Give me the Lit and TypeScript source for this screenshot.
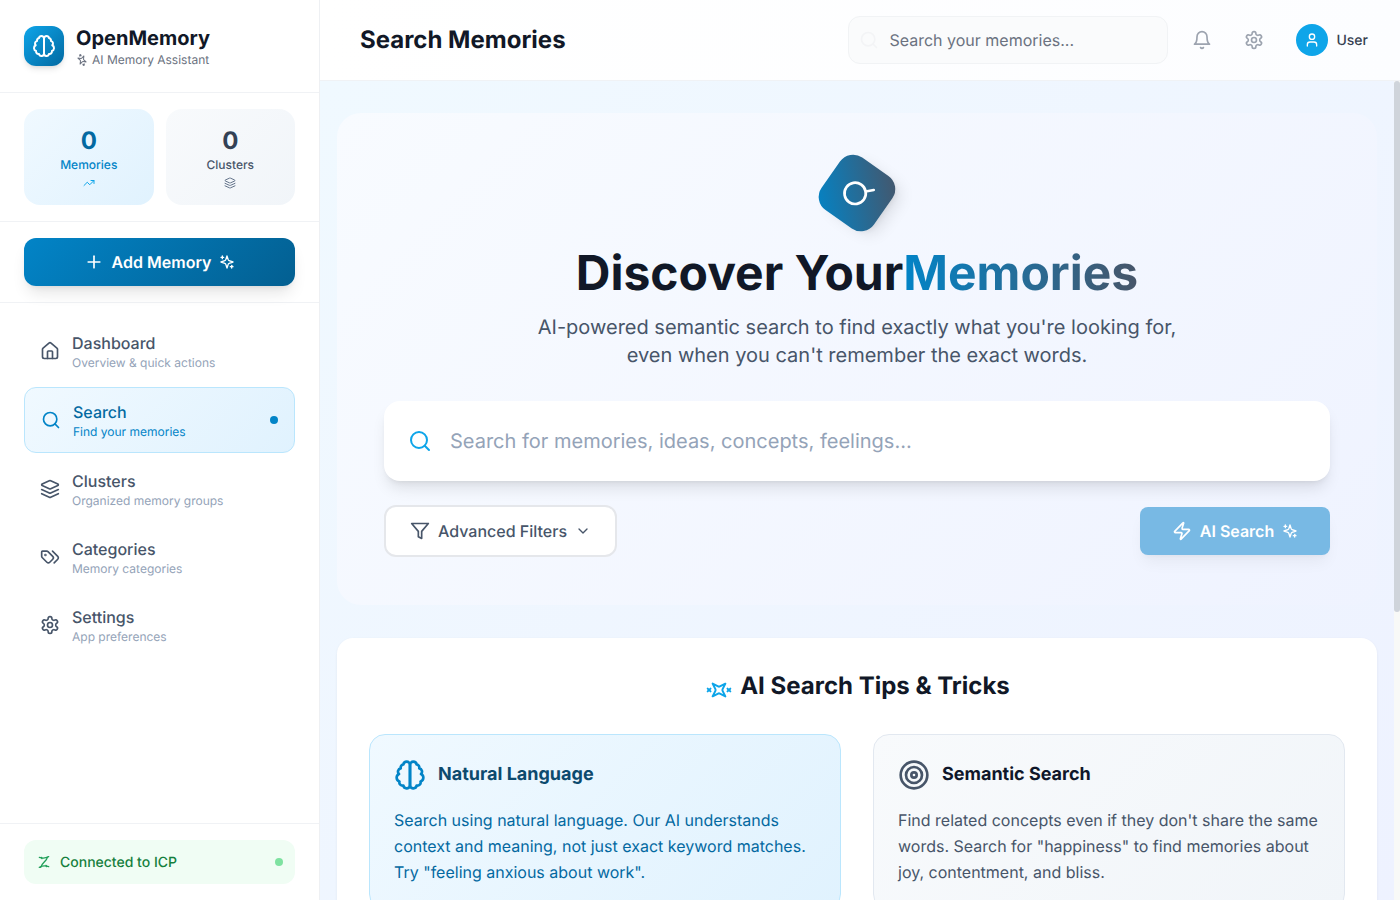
import { LitElement, html, css, svg } from "lit";
import { customElement } from "lit/decorators.js";

/* lucide paths */
const paths = {
  brain: svg`<path d="M9.5 2A2.5 2.5 0 0 1 12 4.5v15a2.5 2.5 0 0 1-4.96.44 2.5 2.5 0 0 1-2.96-3.08 3 3 0 0 1-.34-5.58 2.5 2.5 0 0 1 1.32-4.24 2.5 2.5 0 0 1 1.98-3A2.5 2.5 0 0 1 9.5 2Z"/><path d="M14.5 2A2.5 2.5 0 0 0 12 4.5v15a2.5 2.5 0 0 0 4.96.44 2.5 2.5 0 0 0 2.96-3.08 3 3 0 0 0 .34-5.58 2.5 2.5 0 0 0-1.32-4.24 2.5 2.5 0 0 0-1.98-3A2.5 2.5 0 0 0 14.5 2Z"/>`,
  sparkles: svg`<path d="m12 3-1.912 5.813a2 2 0 0 1-1.275 1.275L3 12l5.813 1.912a2 2 0 0 1 1.275 1.275L12 21l1.912-5.813a2 2 0 0 1 1.275-1.275L21 12l-5.813-1.912a2 2 0 0 1-1.275-1.275L12 3Z"/><path d="M5 3v4"/><path d="M19 17v4"/><path d="M3 5h4"/><path d="M17 19h4"/>`,
  trending: svg`<polyline points="22 7 13.5 15.5 8.5 10.5 2 17"/><polyline points="16 7 22 7 22 13"/>`,
  layers: svg`<path d="m12.83 2.18a2 2 0 0 0-1.66 0L2.6 6.08a1 1 0 0 0 0 1.83l8.58 3.91a2 2 0 0 0 1.66 0l8.58-3.9a1 1 0 0 0 0-1.83Z"/><path d="m22 17.65-9.17 4.16a2 2 0 0 1-1.66 0L2 17.65"/><path d="m22 12.65-9.17 4.16a2 2 0 0 1-1.66 0L2 12.65"/>`,
  plus: svg`<path d="M5 12h14"/><path d="M12 5v14"/>`,
  home: svg`<path d="M15 21v-8a1 1 0 0 0-1-1h-4a1 1 0 0 0-1 1v8"/><path d="M3 10a2 2 0 0 1 .709-1.528l7-5.999a2 2 0 0 1 2.582 0l7 5.999A2 2 0 0 1 21 10v9a2 2 0 0 1-2 2H5a2 2 0 0 1-2-2z"/>`,
  search: svg`<circle cx="11" cy="11" r="8"/><path d="m21 21-4.3-4.3"/>`,
  tags: svg`<path d="m15 5 6.3 6.3a2.4 2.4 0 0 1 0 3.4L17 19"/><path d="M9.586 5.586A2 2 0 0 0 8.172 5H3a1 1 0 0 0-1 1v5.172a2 2 0 0 0 .586 1.414L8.29 18.29a2.426 2.426 0 0 0 3.42 0l3.58-3.58a2.426 2.426 0 0 0 0-3.42z"/><circle cx="6.5" cy="9.5" r=".5" fill="currentColor"/>`,
  settings: svg`<path d="M12.22 2h-.44a2 2 0 0 0-2 2v.18a2 2 0 0 1-1 1.73l-.43.25a2 2 0 0 1-2 0l-.15-.08a2 2 0 0 0-2.73.73l-.22.38a2 2 0 0 0 .73 2.73l.15.1a2 2 0 0 1 1 1.72v.51a2 2 0 0 1-1 1.74l-.15.09a2 2 0 0 0-.73 2.73l.22.38a2 2 0 0 0 2.73.73l.15-.08a2 2 0 0 1 2 0l.43.25a2 2 0 0 1 1 1.73V20a2 2 0 0 0 2 2h.44a2 2 0 0 0 2-2v-.18a2 2 0 0 1 1-1.73l.43-.25a2 2 0 0 1 2 0l.15.08a2 2 0 0 0 2.73-.73l.22-.39a2 2 0 0 0-.73-2.73l-.15-.08a2 2 0 0 1-1-1.74v-.5a2 2 0 0 1 1-1.74l.15-.09a2 2 0 0 0 .73-2.73l-.22-.38a2 2 0 0 0-2.73-.73l-.15.08a2 2 0 0 1-2 0l-.43-.25a2 2 0 0 1-1-1.73V4a2 2 0 0 0-2-2z"/><circle cx="12" cy="12" r="3"/>`,
  zap: svg`<path d="M4 14a1 1 0 0 1-.78-1.63l9.9-10.2a.5.5 0 0 1 .86.46l-1.92 6.02A1 1 0 0 0 13 10h7a1 1 0 0 1 .78 1.63l-9.9 10.2a.5.5 0 0 1-.86-.46l1.92-6.02A1 1 0 0 0 11 14z"/>`,
  filter: svg`<polygon points="22 3 2 3 10 12.46 10 19 14 21 14 12.46 22 3"/>`,
  chevron: svg`<path d="m6 9 6 6 6-6"/>`,
  bell: svg`<path d="M6 8a6 6 0 0 1 12 0c0 7 3 9 3 9H3s3-2 3-9"/><path d="M10.3 21a1.94 1.94 0 0 0 3.4 0"/>`,
  user: svg`<path d="M19 21v-2a4 4 0 0 0-4-4H9a4 4 0 0 0-4 4v2"/><circle cx="12" cy="7" r="4"/>`,
  target: svg`<circle cx="12" cy="12" r="10"/><circle cx="12" cy="12" r="6"/><circle cx="12" cy="12" r="2"/>`,
  // the ICP mark in the reference reads as a twisted Z
  helix: svg`<path d="M5 5c4 1.500 9 1.500 14-1"/><path d="M17 5c-1 6-8 8-10 15"/><path d="M5 20c5-2.500 10-2.500 14-1"/><path d="M9 7l-1-2"/><path d="M16 19l-1-2"/>`,
};

type IconName = keyof typeof paths;

function icon(name: IconName, size: number, cls = "") {
  return html`<svg class=${cls} width=${size} height=${size} viewBox="0 0 24 24" fill="none" stroke="currentColor" stroke-width="2" stroke-linecap="round" stroke-linejoin="round">${paths[name]}</svg>`;
}

const navItems: { icon: IconName; title: string; sub: string; active?: boolean }[] = [
  { icon: "home", title: "Dashboard", sub: "Overview & quick actions" },
  { icon: "search", title: "Search", sub: "Find your memories", active: true },
  { icon: "layers", title: "Clusters", sub: "Organized memory groups" },
  { icon: "tags", title: "Categories", sub: "Memory categories" },
  { icon: "settings", title: "Settings", sub: "App preferences" },
];

@customElement("app-root")
export class AppRoot extends LitElement {
  static styles = css`
    :host {
      display: flex;
      width: 1400px;
      height: 900px;
      overflow: hidden;
      font-family: Inter, "Liberation Sans", sans-serif;
      text-rendering: geometricPrecision;
      color: #0f172a;
      background: #fff;
    }
    svg { display: block; flex: none; }

    /* sidebar */
    .sidebar {
      width: 320px;
      flex: none;
      box-sizing: border-box;
      border-right: 1px solid #eef0f3;
      display: flex;
      flex-direction: column;
      background: #fff;
    }
    .brand {
      height: 93px;
      box-sizing: border-box;
      padding: 26px 24px 0;
      display: flex;
      gap: 12px;
      border-bottom: 1px solid #f0f2f5;
    }
    .logo {
      width: 40px;
      height: 40px;
      border-radius: 12px;
      background: linear-gradient(135deg, #0ea5e9, #0369a1);
      color: #fff;
      display: flex;
      align-items: center;
      justify-content: center;
      box-shadow: 0 4px 6px -1px rgba(0, 0, 0, 0.1), 0 2px 4px -2px rgba(0, 0, 0, 0.1);
    }
    .brand-name { font-size: 20px; font-weight: 700; line-height: 24px; color: #111827; }
    .brand-sub {
      font-size: 12px;
      line-height: 16px;
      margin-top: 2px;
      color: #6b7280;
      display: flex;
      align-items: center;
      gap: 4px;
    }
    .tilt { transform: rotate(25deg); }

    .stats {
      height: 129px;
      box-sizing: border-box;
      padding: 16px 24px;
      display: grid;
      grid-template-columns: 1fr 1fr;
      gap: 12px;
      border-bottom: 1px solid #f0f2f5;
    }
    .stat {
      border-radius: 16px;
      display: flex;
      flex-direction: column;
      align-items: center;
      padding-top: 16px;
      box-sizing: border-box;
    }
    .stat.blue { background: linear-gradient(135deg, #f0f9ff, #e0f2fe); color: #0369a1; }
    .stat.grey { background: linear-gradient(135deg, #f8fafc, #f1f5f9); color: #334155; }
    .stat-value { font-size: 24px; line-height: 32px; font-weight: 700; }
    .stat-label { font-size: 12px; line-height: 16px; font-weight: 500; }
    .stat.blue .stat-label { color: #0284c7; }
    .stat.grey .stat-label { color: #475569; }
    .stat svg { margin-top: 4px; }
    .stat.blue svg { color: #0ea5e9; }
    .stat.grey svg { color: #64748b; }

    .add-wrap {
      height: 81px;
      box-sizing: border-box;
      padding: 16px 24px;
      border-bottom: 1px solid #f0f2f5;
    }
    .add {
      height: 48px;
      border-radius: 12px;
      background: linear-gradient(135deg, #0284c7, #035f91);
      color: #fff;
      font-size: 16px;
      font-weight: 600;
      display: flex;
      align-items: center;
      justify-content: center;
      gap: 8px;
      box-shadow: 0 10px 15px -3px rgba(0, 0, 0, 0.1), 0 4px 6px -4px rgba(0, 0, 0, 0.1);
    }

    .nav {
      flex: 1;
      padding: 16px 24px;
      display: flex;
      flex-direction: column;
      gap: 4px;
    }
    .nav-item {
      display: flex;
      align-items: center;
      gap: 12px;
      padding: 12px 16px;
      border-radius: 12px;
      color: #475569;
    }
    .nav-item.active {
      border: 1px solid #bae6fd;
      background: linear-gradient(135deg, #f0f9ff, #e0f2fe);
      color: #0369a1;
    }
    .nav-text { flex: 1; }
    .nav-title { font-size: 16px; line-height: 24px; font-weight: 500; }
    .nav-sub { font-size: 12px; line-height: 16px; color: #94a3b8; }
    .active .nav-sub { color: #0284c7; }
    .nav-item.active > svg { color: #0284c7; }
    .nav-dot { width: 8px; height: 8px; border-radius: 50%; background: #0284c7; }

    .foot { padding: 16px 24px; border-top: 1px solid #f0f2f5; }
    .conn {
      height: 44px;
      box-sizing: border-box;
      padding: 0 12px;
      border-radius: 12px;
      background: #f0fdf4;
      display: flex;
      align-items: center;
      gap: 8px;
      color: #15803d;
      font-size: 14px;
      font-weight: 500;
    }
    .conn svg { color: #22a05a; }
    .conn span { flex: 1; }
    .conn i { width: 8px; height: 8px; border-radius: 50%; background: #7ee2a0; }

    /* main */
    .main { flex: 1; min-width: 0; display: flex; flex-direction: column; position: relative; }
    .top {
      height: 81px;
      flex: none;
      box-sizing: border-box;
      padding: 0 32px 0 40px;
      display: flex;
      align-items: center;
      border-bottom: 1px solid #f0f2f5;
      background: linear-gradient(90deg, #fff, #fcfdff);
    }
    .top h1 { margin: 0; flex: 1; font-size: 24px; line-height: 32px; font-weight: 700; color: #111827; }
    .top-search {
      width: 320px;
      height: 48px;
      box-sizing: border-box;
      border: 1px solid #f1f3f5;
      border-radius: 12px;
      background: #fafbfc;
      display: flex;
      align-items: center;
      padding-left: 10px;
      gap: 10px;
      font-size: 16px;
      color: #6b7280;
      margin-right: 24px;
    }
    .top-search svg { color: #f3f4f6; }
    .top-btn { width: 20px; height: 20px; color: #9ca3af; margin-right: 32px; }
    .avatar {
      width: 32px;
      height: 32px;
      border-radius: 50%;
      background: #0ea5e9;
      color: #fff;
      display: flex;
      align-items: center;
      justify-content: center;
    }
    .user-name { margin-left: 8px; font-size: 14px; font-weight: 500; color: #374151; }

    .scroll {
      flex: 1;
      min-height: 0;
      overflow: hidden;
      box-sizing: border-box;
      padding: 32px 23px 32px 17px;
      background: linear-gradient(135deg, #f0f9ff, #eef2ff);
    }
    /* headless shots hide native scrollbars, so the bar is drawn over the content */
    .track {
      position: absolute;
      top: 81px;
      right: 0;
      bottom: 0;
      width: 6px;
      background: #f8f9f7;
    }
    .thumb { height: 531px; border-radius: 3px; background: #cfd4db; }

    .hero {
      border-radius: 24px;
      padding: 48px 47px;
      background: linear-gradient(135deg, #f8fbff, #eff3ff);
      display: flex;
      flex-direction: column;
      align-items: center;
    }
    .hero-icon {
      width: 64px;
      height: 64px;
      border-radius: 16px;
      background: linear-gradient(135deg, #0284c7, #475569);
      color: #fff;
      display: flex;
      align-items: center;
      justify-content: center;
      transform: rotate(-55deg);
      box-shadow: 0 10px 15px -3px rgba(0, 0, 0, 0.1), 0 4px 6px -4px rgba(0, 0, 0, 0.1);
      margin-bottom: 24px;
    }
    .hero h2 {
      margin: 0 0 16px;
      font-size: 48px;
      line-height: 48px;
      font-weight: 700;
      color: #111827;
      display: flex;
    }
    .grad {
      background: linear-gradient(90deg, #0284c7, #475569);
      -webkit-background-clip: text;
      background-clip: text;
      color: transparent;
    }
    .hero p {
      margin: 0 0 32px;
      width: 672px;
      font-size: 20px;
      line-height: 28px;
      color: #475569;
      text-align: center;
    }
    .big-search {
      align-self: stretch;
      height: 80px;
      box-sizing: border-box;
      border-radius: 16px;
      background: #fff;
      display: flex;
      align-items: center;
      padding-left: 24px;
      gap: 18px;
      font-size: 20px;
      color: #94a3b8;
      box-shadow: 0 10px 15px -3px rgba(0, 0, 0, 0.1), 0 4px 6px -4px rgba(0, 0, 0, 0.1);
      margin-bottom: 24px;
    }
    .big-search svg { color: #0ea5e9; }
    .actions { align-self: stretch; display: flex; justify-content: space-between; align-items: center; }
    .filters {
      height: 52px;
      box-sizing: border-box;
      padding: 0 24px;
      border: 2px solid #e5e7eb;
      border-radius: 12px;
      background: #fff;
      color: #475569;
      font-size: 16px;
      font-weight: 500;
      display: flex;
      align-items: center;
      gap: 8px;
    }
    .ai {
      width: 190px;
      height: 48px;
      border-radius: 8px;
      background: #78b9e4;
      color: #fff;
      font-size: 16px;
      font-weight: 600;
      display: flex;
      align-items: center;
      justify-content: center;
      gap: 8px;
      box-shadow: 0 10px 15px -3px rgba(0, 0, 0, 0.05), 0 4px 6px -4px rgba(0, 0, 0, 0.05);
    }

    .tips {
      margin-top: 33px;
      min-height: 660px;
      box-sizing: border-box;
      padding: 32px;
      border-radius: 16px;
      background: #fff;
      box-shadow: 0 1px 3px rgba(0, 0, 0, 0.06);
    }
    .tips-head {
      display: flex;
      justify-content: center;
      align-items: center;
      gap: 12px;
      font-size: 24px;
      line-height: 32px;
      font-weight: 700;
      color: #111827;
      margin-bottom: 32px;
    }
    .tips-head svg { color: #0ea5e9; transform: translate(3px, 4px) rotate(-45deg); }
    .tips-grid { display: grid; grid-template-columns: 1fr 1fr; gap: 32px; }
    .tip { border-radius: 16px; padding: 24px; border: 1px solid; }
    .tip.blue { background: linear-gradient(135deg, #f0f9ff, #e0f2fe); border-color: #bae6fd; color: #0369a1; }
    .tip.grey { background: linear-gradient(135deg, #f8fafc, #f1f5f9); border-color: #e2e8f0; color: #475569; }
    .tip-head { display: flex; align-items: center; gap: 12px; margin-bottom: 16px; }
    .tip h3 { margin: 0; font-size: 18px; line-height: 28px; font-weight: 700; }
    .tip.blue h3 { color: #0c4a6e; }
    .tip.grey h3 { color: #0f172a; }
    .tip.blue svg { color: #0284c7; }
    .tip p { margin: 0; font-size: 16px; line-height: 26px; }
  `;

  render() {
    return html`
      <aside class="sidebar">
        <div class="brand">
          <div class="logo">${icon("brain", 24)}</div>
          <div>
            <div class="brand-name">OpenMemory</div>
            <div class="brand-sub">${icon("sparkles", 12, "tilt")}AI Memory Assistant</div>
          </div>
        </div>
        <div class="stats">
          <div class="stat blue">
            <div class="stat-value">0</div>
            <div class="stat-label">Memories</div>
            ${icon("trending", 12)}
          </div>
          <div class="stat grey">
            <div class="stat-value">0</div>
            <div class="stat-label">Clusters</div>
            ${icon("layers", 12)}
          </div>
        </div>
        <div class="add-wrap">
          <div class="add">${icon("plus", 20)}Add Memory${icon("sparkles", 16)}</div>
        </div>
        <nav class="nav">
          ${navItems.map(
            (n) => html`
              <div class="nav-item ${n.active ? "active" : ""}">
                ${icon(n.icon, 20)}
                <div class="nav-text">
                  <div class="nav-title">${n.title}</div>
                  <div class="nav-sub">${n.sub}</div>
                </div>
                ${n.active ? html`<div class="nav-dot"></div>` : ""}
              </div>
            `
          )}
        </nav>
        <div class="foot">
          <div class="conn">${icon("helix", 16)}<span>Connected to ICP</span><i></i></div>
        </div>
      </aside>

      <div class="main">
        <header class="top">
          <h1>Search Memories</h1>
          <div class="top-search">${icon("search", 20)}Search your memories...</div>
          <div class="top-btn">${icon("bell", 20)}</div>
          <div class="top-btn">${icon("settings", 20)}</div>
          <div class="avatar">${icon("user", 16)}</div>
          <div class="user-name">User</div>
        </header>
        <div class="scroll">
          <section class="hero">
            <div class="hero-icon">${icon("search", 32)}</div>
            <h2>Discover Your<span class="grad">Memories</span></h2>
            <p>AI-powered semantic search to find exactly what you're looking for, even when you can't remember the exact words.</p>
            <div class="big-search">${icon("search", 24)}Search for memories, ideas, concepts, feelings...</div>
            <div class="actions">
              <div class="filters">${icon("filter", 20)}Advanced Filters${icon("chevron", 16)}</div>
              <div class="ai">${icon("zap", 20)}AI Search${icon("sparkles", 16)}</div>
            </div>
          </section>
          <section class="tips">
            <div class="tips-head">${icon("sparkles", 24)}AI Search Tips &amp; Tricks</div>
            <div class="tips-grid">
              <div class="tip blue">
                <div class="tip-head">${icon("brain", 32)}<h3>Natural Language</h3></div>
                <p>Search using natural language. Our AI understands context and meaning, not just exact keyword matches. Try "feeling anxious about work".</p>
              </div>
              <div class="tip grey">
                <div class="tip-head">${icon("target", 32)}<h3>Semantic Search</h3></div>
                <p>Find related concepts even if they don't share the same words. Search for "happiness" to find memories about joy, contentment, and bliss.</p>
              </div>
            </div>
          </section>
        </div>
        <div class="track"><div class="thumb"></div></div>
      </div>
    `;
  }
}
